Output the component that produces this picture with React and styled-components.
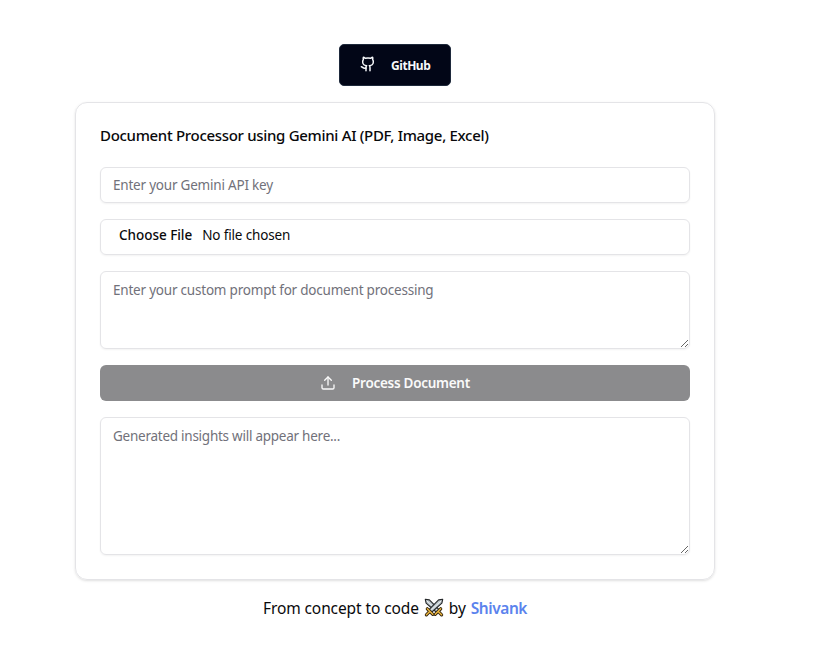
import React from "react";
import styled, { createGlobalStyle, css } from "styled-components";
import { Github, Upload } from "lucide-react";

const GlobalStyle = createGlobalStyle`
  *, *::before, *::after { box-sizing: border-box; }
  body {
    margin: 0;
    background: #fff;
    color: #09090b;
    font-family: "Segoe UI", "Noto Sans", sans-serif;
  }
`;

const Page = styled.main`
  width: 790px;
  height: 662px;
  padding-top: 44px;
  display: flex;
  flex-direction: column;
  align-items: center;
`;

const GithubButton = styled.button`
  width: 112px;
  height: 42px;
  display: flex;
  align-items: center;
  padding: 0 0 0 20px;
  gap: 15px;
  border: 1px solid #1e293b;
  border-radius: 5px;
  background: #020617;
  color: #f8fafc;
  font: 700 12px "Segoe UI", "Noto Sans", sans-serif;
  letter-spacing: -0.45px;

  svg {
    margin-bottom: 2px;
  }
`;

const Card = styled.section`
  width: 640px;
  margin-top: 16px;
  padding: 24px;
  border: 1px solid #e4e4e7;
  border-radius: 12px;
  box-shadow: 0 1px 3px rgba(0, 0, 0, 0.1), 0 1px 2px -1px rgba(0, 0, 0, 0.1);
`;

const Title = styled.h1`
  margin: 0 0 24px;
  font-size: 15px;
  font-weight: 500;
  line-height: 16px;
  white-space: nowrap;
  letter-spacing: -0.31px;
`;

const Form = styled.div`
  display: flex;
  flex-direction: column;
  gap: 16px;
`;

const field = css`
  display: block;
  width: 100%;
  margin: 0;
  border: 1px solid #e4e4e7;
  border-radius: 6px;
  background: transparent;
  color: #09090b;
  box-shadow: 0 1px 2px rgba(0, 0, 0, 0.05);
  font: 400 13.5px/20px "Segoe UI", "Noto Sans", sans-serif;
  letter-spacing: -0.21px;
  &::placeholder { color: #71717a; opacity: 1; }
`;

const TextInput = styled.input`
  ${field}
  height: 36px;
  padding: 4px 12px;
`;

const FileInput = styled(TextInput)`
  letter-spacing: -0.15px;

  &::file-selector-button {
    margin: 0 4px 0 0;
    padding: 1px 6px;
    border: 0;
    background: transparent;
    color: #09090b;
    font: 500 13.5px/20px "Segoe UI", "Noto Sans", sans-serif;
    letter-spacing: -0.03px;
  }
`;

const TextArea = styled.textarea`
  ${field}
  height: ${({ $height }) => $height}px;
  padding: 8px 12px;
  resize: vertical;
`;

const ResultArea = styled(TextArea)`
  letter-spacing: -0.25px;
`;

const ProcessButton = styled.button`
  height: 36px;
  display: flex;
  align-items: center;
  justify-content: center;
  gap: 16px;
  padding: 0;
  border: 0;
  border-radius: 6px;
  background: #8b8b8d;
  color: #fafafa;
  font: 600 13.5px "Segoe UI", "Noto Sans", sans-serif;
  letter-spacing: -0.28px;
`;

const Credit = styled.p`
  display: flex;
  align-items: center;
  margin: 16px 0 0;
  font-size: 15.5px;
  line-height: 24px;
  letter-spacing: -0.1px;
  white-space: nowrap;
`;

const Swords = styled.svg`
  width: 20px;
  height: 20px;
  margin: 0 5px;
`;

const AuthorLink = styled.a`
  margin-left: 5px;
  color: #5b83ed;
  font-weight: 600;
  letter-spacing: -0.45px;
`;

const Sword = () => (
  <>
    <path
      d="M18.7 1.300 14.600 1.900 5.200 11.300 7.900 14 17.900 5.200Z"
      fill="#b9c3c9"
      stroke="#25282a"
      strokeWidth="1.100"
      strokeLinejoin="round"
    />
    <path d="M17 3 7.200 12" stroke="#f4f7f8" strokeWidth="0.900" />
    <path d="M3.300 10.800 8.800 16.300M5.500 13.700 2.400 16.800" stroke="#33250f" strokeWidth="3.200" strokeLinecap="round" />
    <path d="M3.300 10.800 8.800 16.300M5.500 13.700 2.400 16.800" stroke="#efb83f" strokeWidth="1.400" strokeLinecap="round" />
  </>
);

const CrossedSwords = () => (
  <Swords viewBox="0 0 20 20" aria-label="crossed swords">
    <g transform="translate(20 0) scale(-1 1)">
      <Sword />
    </g>
    <Sword />
  </Swords>
);

export default function App() {
  return (
    <>
      <GlobalStyle />
      <Page>
        <GithubButton type="button">
          <Github size={16} strokeWidth={2.2} />
          <span>GitHub</span>
        </GithubButton>
        <Card>
          <Title>Document Processor using Gemini AI (PDF, Image, Excel)</Title>
          <Form>
            <TextInput placeholder="Enter your Gemini API key" />
            <FileInput type="file" />
            <TextArea $height={78} placeholder="Enter your custom prompt for document processing" />
            <ProcessButton type="button">
              <Upload size={16} strokeWidth={2} />
              <span>Process Document</span>
            </ProcessButton>
            <ResultArea $height={138} placeholder="Generated insights will appear here..." />
          </Form>
        </Card>
        <Credit>
          <span>From concept to code</span>
          <CrossedSwords />
          <span>by</span>
          <AuthorLink>Shivank</AuthorLink>
        </Credit>
      </Page>
    </>
  );
}
